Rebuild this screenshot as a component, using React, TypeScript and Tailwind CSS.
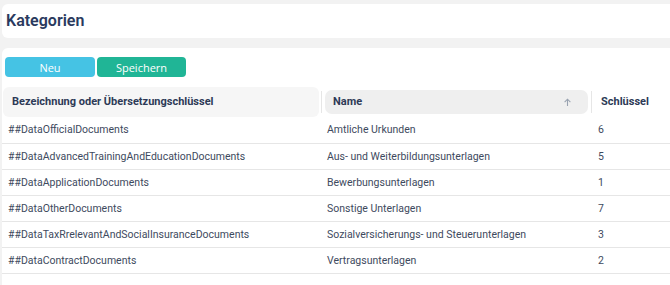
import React from "react";

const rows = [
  ["##DataOfficialDocuments", "Amtliche Urkunden", "6"],
  ["##DataAdvancedTrainingAndEducationDocuments", "Aus- und Weiterbildungsunterlagen", "5"],
  ["##DataApplicationDocuments", "Bewerbungsunterlagen", "1"],
  ["##DataOtherDocuments", "Sonstige Unterlagen", "7"],
  ["##DataTaxRrelevantAndSocialInsuranceDocuments", "Sozialversicherungs- und Steuerunterlagen", "3"],
  ["##DataContractDocuments", "Vertragsunterlagen", "2"],
];

export default function App() {
  return (
    <div
      className="h-[285px] overflow-hidden bg-[#f2f2f2] pt-[4px] pl-[2px]"
      style={{ fontFamily: "Roboto, 'Liberation Sans', sans-serif" }}
    >
      <div className="h-[34px] bg-white rounded-l-[6px] flex items-center pl-[4px]">
        <h1 className="text-[16px] font-semibold text-[#2a3a5e] leading-none">Kategorien</h1>
      </div>
      <div className="mt-[10px] bg-white rounded-tl-[6px] h-[240px]">
        <div className="flex gap-[2px] pt-[9px] pl-[3px]">
          <button
            className="w-[90px] h-[20px] rounded-[4px] bg-[#45c3e4] text-white text-[11px] leading-none"
            style={{ fontFamily: "'Open Sans', sans-serif" }}
          >
            Neu
          </button>
          <button
            className="w-[89px] h-[20px] rounded-[4px] bg-[#20b596] text-white text-[11px] leading-none"
            style={{ fontFamily: "'Open Sans', sans-serif" }}
          >
            Speichern
          </button>
        </div>
        <div className="mt-[10px]">
          <div className="grid grid-cols-[320px_270px_1fr] h-[30px] items-center">
            <div className="relative h-[30px] flex items-center">
              <div className="ml-[1px] mr-[3px] h-[30px] w-full bg-[#f6f6f6] rounded-[6px] flex items-center pl-[9px] text-[11px] font-bold text-[#2d3a56]">
                Bezeichnung oder Übersetzungschlüssel
              </div>
              <div className="absolute right-0 top-[4px] h-[22px] w-[1px] bg-[#e6e6e6]" />
            </div>
            <div className="relative h-[30px] flex items-center">
              <div className="ml-[3px] mr-[4px] h-[24px] w-full bg-[#efefef] rounded-[7px] flex items-center justify-between pl-[8px] pr-[16px] text-[11px] font-bold text-[#2d3a56]">
                <span>Name</span>
                <svg width="9" height="9" viewBox="0 0 10 10" fill="none" stroke="#98a2b0" strokeWidth="1.2">
                  <path d="M5 9V1.5M1.8 4.5L5 1.3l3.2 3.2" />
                </svg>
              </div>
              <div className="absolute right-0 top-[4px] h-[22px] w-[1px] bg-[#e6e6e6]" />
            </div>
            <div className="pl-[9px] text-[11px] font-bold text-[#2d3a56]">Schlüssel</div>
          </div>
          {rows.map((r, i) => (
            <div
              key={i}
              className={`grid grid-cols-[320px_270px_1fr] items-center border-b border-[#e6e6e6] text-[10.5px] text-[#3e4a5e] ${i === 0 ? "h-[27px]" : "h-[26px]"}`}
            >
              <div className="pl-[6px]">{r[0]}</div>
              <div className="pl-[5px]">{r[1]}</div>
              <div className="pl-[6px]">{r[2]}</div>
            </div>
          ))}
        </div>
      </div>
    </div>
  );
}
